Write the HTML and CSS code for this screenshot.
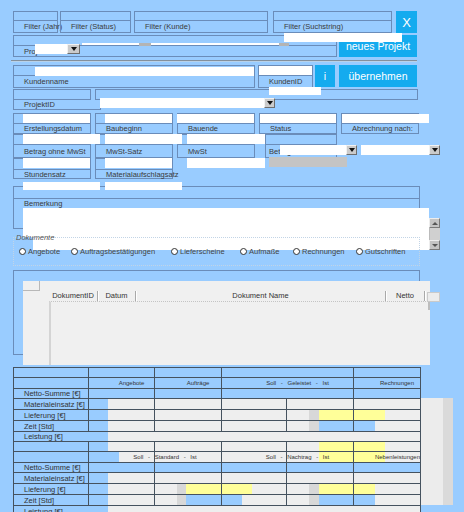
FILE: index.html
```html
<!DOCTYPE html>
<html lang="de">
<head>
<meta charset="utf-8">
<title>Projekte</title>
<link rel="stylesheet" href="styles.css">
</head>
<body>
<div class="form">

  <div class="sec s-filter">
    <div class="fld f-jahr"><div class="inp"></div><div class="lbl">Filter (Jahr)</div></div>
    <div class="fld f-status"><div class="inp"></div><div class="lbl">Filter (Status)</div></div>
    <div class="fld f-kunde"><div class="inp"></div><div class="lbl">Filter (Kunde)</div></div>
    <div class="fld f-such"><div class="inp"></div><div class="lbl">Filter (Suchstring)</div></div>
    <div class="btn btn-x">X</div>
  </div>

  <div class="sec s-pro">
    <div class="fld f-pro"><div class="inp"></div><div class="lbl">Projekt</div></div>
    <div class="btn btn-new">neues Projekt</div>
    <div class="ov ov-pro"></div>
    <div class="dd dd-pro"></div>
    <div class="slider"><span class="thumb t1"></span><span class="thumb t2"></span></div>
    <div class="ov ov-such"></div>
  </div>

  <div class="sep"></div>

  <div class="sec s-kunde">
    <div class="fld f-kname"><div class="inp"></div><div class="lbl">Kundenname</div></div>
    <div class="fld f-kid"><div class="inp white"></div><div class="lbl">KundenID</div></div>
    <div class="btn btn-i">i</div>
    <div class="btn btn-ok">übernehmen</div>
    <div class="ov ov-kname"></div>
    <div class="ov ov-kbelow"></div>
  </div>

  <div class="sec s-projid">
    <div class="line">
      <div class="box b-pid"></div>
      <div class="box b-pid2"></div>
    </div>
    <div class="pid-lbl">ProjektID</div>
    <div class="ov ov-pid"></div>
    <div class="dd dd-pid"></div>
  </div>

  <div class="sec s-dates">
    <div class="fld"><div class="inp"></div><div class="lbl">Erstellungsdatum</div></div>
    <div class="fld"><div class="inp"></div><div class="lbl">Baubeginn</div></div>
    <div class="fld"><div class="inp"></div><div class="lbl">Bauende</div></div>
    <div class="fld"><div class="inp"></div><div class="lbl">Status</div></div>
    <div class="fld"><div class="inp"></div><div class="lbl">Abrechnung nach:</div></div>
    <div class="ov e1"></div>
    <div class="ov e2"></div>
    <div class="ov e3"></div>
    <div class="ov e4"></div>
    <div class="ov e5"></div>
  </div>

  <div class="sec s-betrag">
    <div class="fld"><div class="inp"></div><div class="lbl">Betrag ohne MwSt</div></div>
    <div class="fld"><div class="inp"></div><div class="lbl">MwSt-Satz</div></div>
    <div class="fld"><div class="inp"></div><div class="lbl">MwSt</div></div>
    <div class="fld f-bet"><div class="inp"></div><div class="lbl">Betrag</div></div>
    <div class="ov w1"></div>
    <div class="ov w2"></div>
    <div class="ov w3"></div>
    <div class="ov cb1"></div>
    <div class="dd dd1"></div>
    <div class="ov cb2"></div>
    <div class="dd dd2"></div>
    <div class="ov grey"></div>
  </div>

  <div class="sec s-rate">
    <div class="fld"><div class="inp"></div><div class="lbl">Stundensatz</div></div>
    <div class="fld"><div class="inp"></div><div class="lbl">Materialaufschlagsatz</div></div>
    <div class="ov r1"></div>
    <div class="ov r2"></div>
    <div class="ov r3"></div>
    <div class="ov r4"></div>
    <div class="ov r5"></div>
  </div>

  <div class="sec s-bem">
    <div class="fld f-bem"><div class="inp"></div><div class="lbl">Bemerkung</div></div>
    <div class="ov ta1"></div>
    <div class="ov ta2"></div>
    <div class="vscroll">
      <div class="sb-btn up"></div>
      <div class="sb-track"></div>
      <div class="sb-btn down"></div>
    </div>
  </div>

  <div class="sec s-docs">
    <span class="legend">Dokumente</span>
    <div class="radios">
      <label class="radio"><i></i>Angebote</label>
      <label class="radio"><i></i>Auftragsbestätigungen</label>
      <label class="radio"><i></i>Lieferscheine</label>
      <label class="radio"><i></i>Aufmaße</label>
      <label class="radio"><i></i>Rechnungen</label>
      <label class="radio"><i></i>Gutschriften</label>
    </div>
  </div>

  <div class="sec s-list">
    <div class="panel">
      <div class="corner"></div>
      <div class="lhead">
        <div class="h-id">DokumentID</div>
        <div class="h-dat">Datum</div>
        <div class="h-name">Dokument Name</div>
        <div class="h-net">Netto</div>
      </div>
      <div class="lbody"></div>
      <div class="thumbv"></div>
    </div>
    <div class="xbox"></div>
  </div>

  <div class="tables">
    <div class="grid">
      <div class="tr top h11">
        <div></div><div></div><div></div><div class="s2"></div><div></div>
      </div>
      <div class="tr h11 head">
        <div></div><div>Angebote</div><div>Aufträge</div><div class="s2">Soll - Geleistet - Ist</div><div>Rechnungen</div>
      </div>
      <div class="tr h10">
        <div class="rl">Netto-Summe [€]</div><div></div><div></div><div class="s2"></div><div></div>
      </div>
      <div class="tr h11">
        <div class="rl">Materialeinsatz [€]</div><div class="g19"></div><div class="g"></div><div class="g"></div><div class="g"></div><div class="g"></div>
      </div>
      <div class="tr h11">
        <div class="rl">Lieferung [€]</div><div class="g19"></div><div class="g"></div><div class="g"></div><div class="c5y"></div><div class="c6y"></div>
      </div>
      <div class="tr h11">
        <div class="rl">Zeit [Std]</div><div class="g19"></div><div class="g"></div><div class="g"></div><div class="c5b"></div><div class="c6b"></div>
      </div>
      <div class="tr h9 last">
        <div class="rl all lst">Leistung [€]</div>
      </div>

      <div class="tr top h11">
        <div></div><div class="g19"></div><div class="g"></div><div class="g"></div><div class="c5y2"></div><div class="c6y"></div>
      </div>
      <div class="tr h11 head">
        <div></div><div class="s2 hs1">Soll - Standard - Ist</div><div class="s2 hs2">Soll - Nachtrag - Ist</div><div class="c6y">Nebenleistungen</div>
      </div>
      <div class="tr h10">
        <div class="rl">Netto-Summe [€]</div><div></div><div></div><div></div><div></div><div></div>
      </div>
      <div class="tr h11">
        <div class="rl">Materialeinsatz [€]</div><div class="g19"></div><div class="g"></div><div class="g"></div><div class="g"></div><div class="g"></div>
      </div>
      <div class="tr h11">
        <div class="rl">Lieferung [€]</div><div class="g19"></div><div class="c3y"></div><div class="c4y"></div><div class="c5y"></div><div class="c6y2"></div>
      </div>
      <div class="tr h11">
        <div class="rl">Zeit [Std]</div><div class="g19"></div><div class="c3b"></div><div class="c4b"></div><div class="c5b"></div><div class="c6b"></div>
      </div>
      <div class="tr h10 last">
        <div class="rl all lst">Leistung [€]</div>
      </div>
    </div>
    <div class="side"></div>
  </div>

</div>
</body>
</html>
```

FILE: styles.css
```css
* { box-sizing: border-box; margin: 0; padding: 0; }
html, body { width: 464px; height: 512px; overflow: hidden; }
body {
  background: #99ccff;
  font-family: "Liberation Sans", Arial, sans-serif;
  font-size: 7.5px;
  color: #3a3a3a;
}
.form { position: relative; padding-top: 11px; }
.sec { position: relative; margin-left: 13px; }

.fld { border: 1px solid #6a8cb9; display: flex; flex-direction: column; flex: none; }
.inp { border-bottom: 1px solid #6a8cb9; flex: none; }
.lbl { flex: 1; padding-left: 10px; white-space: nowrap; display: flex; align-items: center; }
.white { background: #fff; }

.btn {
  flex: none; background: #14abef; color: #fff;
  display: flex; align-items: center; justify-content: center;
  font-size: 10.5px; white-space: nowrap;
}
.ov { position: absolute; background: #fff; }
.dd {
  position: absolute; background: #cbcbcb;
  border: 1px solid; border-color: #f2f2f2 #6e6e6e #6e6e6e #f2f2f2;
  display: flex; align-items: center; justify-content: center;
}
.dd::after {
  content: ""; border-left: 3.5px solid transparent; border-right: 3.5px solid transparent;
  border-top: 4px solid #111;
}

/* filter row */
.s-filter { display: flex; height: 22px; }
.s-filter .inp { height: 9px; }
.f-jahr { width: 45px; margin-right: 2px; }
.f-status { width: 71px; margin-right: 3px; }
.f-kunde { width: 134px; margin-right: 5px; }
.f-such { width: 119px; margin-right: 4px; }
.btn-x { width: 21px; font-size: 13px; }

/* projekt row */
.s-pro { display: flex; height: 22px; margin-top: 2px; }
.s-pro .inp { height: 10px; }
.f-pro { width: 324px; margin-right: 2px; }
.btn-new { width: 78px; }
.ov-pro { left: 22px; top: 9px; width: 32px; height: 10px; }
.dd-pro { left: 54px; top: 9px; width: 13px; height: 10px; }
.slider { position: absolute; left: 69px; top: 8px; width: 197px; height: 2px; background: #fff; }
.thumb { position: absolute; top: 0; height: 3px; background: #b4b4b4; }
.t1 { left: 57px; width: 12px; }
.t2 { left: 197px; width: 10px; }
.ov-such { left: 271px; top: -2px; width: 118px; height: 9px; z-index: 2; }

.sep {
  margin: 3px 0 0 11px; width: 406px; height: 2px;
  background: linear-gradient(#84909c 50%, #b8d2ea 50%);
}

/* kunde row */
.s-kunde { display: flex; height: 23px; margin-top: 3px; }
.s-kunde .inp { height: 10px; }
.f-kname { width: 242px; margin-right: 3px; }
.f-kid { width: 55px; margin-right: 2px; }
.btn-i { width: 20px; height: 22px; margin-right: 4px; }
.btn-ok { width: 78px; height: 22px; }
.ov-kname { left: 22px; top: 2px; width: 219px; height: 9px; }
.ov-kbelow { left: 256px; top: 22px; width: 52px; height: 8px; z-index: 2; }

/* projektID */
.s-projid { margin-top: 1px; height: 21px; }
.line { display: flex; height: 11px; }
.box { border: 1px solid #6a8cb9; height: 11px; flex: none; }
.b-pid { width: 78px; margin-right: 4px; }
.b-pid2 { width: 323px; }
.pid-lbl {
  width: 88px; height: 10px; border: 1px solid #6a8cb9; border-top: 0;
  padding-left: 10px; line-height: 9px; white-space: nowrap;
}
.ov-pid { left: 87px; top: 9px; width: 164px; height: 10px; }
.dd-pid { left: 251px; top: 9px; width: 11px; height: 10px; }

/* dates */
.s-dates {
  margin-top: 3px; height: 21px;
  display: grid; grid-template-columns: repeat(5, 78px); column-gap: 4px;
}
.s-dates .inp { height: 10px; }
.e1, .e2, .e3, .e4, .e5 { top: 1px; height: 9px; }
.e1 { left: 10px; width: 67px; }
.e2 { left: 92px; width: 67px; }
.e3 { left: 164px; width: 77px; }
.e4 { left: 247px; width: 76px; }
.e5 { left: 329px; width: 87px; }

/* betrag */
.s-betrag { display: flex; height: 24px; }
.s-betrag .fld { width: 78px; margin-right: 4px; }
.s-betrag .inp { height: 10px; }
.s-betrag .fld.f-bet { width: 72px; margin-left: 6px; margin-right: 0; }
.f-bet .lbl { padding-left: 3px; }
.w1, .w2, .w3 { top: 0; height: 10px; }
.w1 { left: 10px; width: 77px; }
.w2 { left: 92px; width: 77px; }
.w3 { left: 174px; width: 78px; }
.cb1 { left: 267px; top: 11px; width: 66px; height: 10px; }
.dd1 { left: 333px; top: 11px; width: 11px; height: 10px; }
.cb2 { left: 348px; top: 11px; width: 68px; height: 10px; }
.dd2 { left: 416px; top: 11px; width: 11px; height: 10px; }
.grey { left: 256px; top: 23px; width: 78px; height: 10px; background: #c4c4c4; z-index: 2; }

/* rates */
.s-rate { display: flex; height: 21px; }
.s-rate .fld { width: 78px; margin-right: 4px; }
.s-rate .inp { height: 11px; }
.r1, .r2, .r3 { top: 0; height: 10px; }
.r1 { left: 10px; width: 67px; }
.r2 { left: 92px; width: 67px; }
.r3 { left: 174px; width: 78px; }
.r4, .r5 { top: 24px; height: 8px; z-index: 2; }
.r4 { left: 10px; width: 77px; }
.r5 { left: 92px; width: 77px; }

/* bemerkung */
.s-bem { margin-top: 7px; height: 43px; }
.f-bem { width: 407px; height: 43px; }
.f-bem .inp { height: 12px; }
.f-bem .lbl { flex: none; height: 8px; }
.ta1 { left: 10px; top: 22px; width: 406px; height: 29px; z-index: 1; }
.ta2 { left: 20px; top: 51px; width: 396px; height: 13px; z-index: 1; }
.vscroll {
  position: absolute; left: 416px; top: 32px; width: 11px; height: 32px;
  background: #c9c9c9; display: flex; flex-direction: column; z-index: 1;
}
.sb-btn {
  height: 10px; flex: none; background: #c4c4c4;
  border: 1px solid; border-color: #ededed #7a7a7a #7a7a7a #ededed;
  display: flex; align-items: center; justify-content: center;
}
.sb-btn.up::after {
  content: ""; border-left: 3px solid transparent; border-right: 3px solid transparent;
  border-bottom: 3px solid #555;
}
.sb-btn.down::after {
  content: ""; border-left: 3px solid transparent; border-right: 3px solid transparent;
  border-top: 3px solid #555;
}
.sb-track { flex: 1; background: #d0d0d0; border-left: 1px solid #bbb; }

/* dokumente */
.s-docs {
  margin-top: 8px; width: 407px; height: 29px;
  border: 1px dotted #c2d4e6; z-index: 2;
}
.legend {
  position: absolute; left: 2px; top: -5px; font-style: italic; color: #555;
  line-height: 9px; white-space: nowrap;
}
.radios { display: flex; padding-left: 5px; margin-top: 9px; height: 8px; align-items: center; }
.radio { display: flex; align-items: center; gap: 2px; white-space: nowrap; flex: none; color: #444; }
.radio i {
  width: 7px; height: 7px; border: 1px solid #333; border-radius: 50%;
  background: #fff; flex: none;
}
.radio:nth-child(1) { width: 52px; }
.radio:nth-child(2) { width: 100px; }
.radio:nth-child(3) { width: 69px; }
.radio:nth-child(4) { width: 53px; }
.radio:nth-child(5) { width: 63px; }

/* dokument list */
.s-list { margin-top: 4px; width: 407px; height: 85px; border: 1px solid #6a8cb9; }
.panel {
  position: absolute; left: 9px; top: 10px; width: 407px; height: 84px;
  background: #f0f0f0; z-index: 1;
}
.corner { width: 17px; height: 10px; border-right: 1px solid #b8b8b8; border-bottom: 1px solid #b8b8b8; }
.lhead { display: flex; height: 10px; margin-left: 26px; color: #333; }
.lhead div {
  flex: none; text-align: center; line-height: 10px; white-space: nowrap;
  border-right: 1px solid #a9a9a9; box-shadow: 1px 0 0 #fff;
}
.h-id { width: 49px; }
.h-dat { width: 38px; }
.h-name { width: 250px; }
.h-net { width: 39px; }
.lbody {
  margin-left: 26px; height: 64px;
  border-top: 1px dotted #c4c4c4; border-left: 2px solid #d4d4d4;
}
.thumbv { position: absolute; right: 0; top: 21px; width: 2px; height: 8px; background: #bdbdbd; }
.xbox {
  position: absolute; left: 413px; top: 21px; width: 13px; height: 10px;
  background: #ececec; border: 1px solid #cacaca; z-index: 2;
}

/* tables */
.tables { display: flex; margin-left: 13px; margin-top: 12px; align-items: flex-start; }
.grid { width: 408px; border-left: 1px solid #45525f; flex: none; }
.tr {
  display: grid; grid-template-columns: 75px 66px 67px 65px 67px 67px;
  border-bottom: 1px solid #45525f;
}
.tr.top { border-top: 1px solid #45525f; }
.tr.last { border-bottom: 0; }
.h9 { height: 9px; }
.h10 { height: 10px; }
.h11 { height: 11px; }
.tr > div {
  border-right: 1px solid #45525f; white-space: nowrap;
  display: flex; align-items: center; color: #333;
}
.rl { padding-left: 10px; }
.s2 { grid-column: span 2; }
.all { grid-column: 1 / -1; }
.head > div { font-size: 6px; justify-content: center; padding-left: 20px; word-spacing: 3px; }
.head > div:first-child { padding-left: 0; }

.g { background: #eeeeee; }
.g19 { background: linear-gradient(to right, transparent 19px, #eeeeee 19px); }
.lst { background: linear-gradient(to right, transparent 94px, #eeeeee 94px); }
.c5y { background: linear-gradient(to right, #eeeeee 22px, #d8d8d8 22px, #d8d8d8 32px, #ffff99 32px); }
.c5b { background: linear-gradient(to right, #eeeeee 22px, #d8d8d8 22px, #d8d8d8 32px, transparent 32px); }
.c5y2 { background: linear-gradient(to right, #eeeeee 32px, #ffff99 32px); }
.c6y { background: linear-gradient(to right, #ffff99 31px, #eeeeee 31px); }
.c6y2 { background: linear-gradient(to right, #ffff99 21px, #eeeeee 21px); }
.c6b { background: linear-gradient(to right, transparent 21px, #eeeeee 21px); }
.c3y { background: linear-gradient(to right, #eeeeee 22px, #d8d8d8 22px, #d8d8d8 31px, #ffff99 31px); }
.c3b { background: linear-gradient(to right, #eeeeee 22px, #d8d8d8 22px, #d8d8d8 31px, transparent 31px); }
.c4y { background: linear-gradient(to right, #ffff99 30px, #eeeeee 30px); }
.c4b { background: linear-gradient(to right, transparent 20px, #eeeeee 20px); }
.hs1 {
  background: linear-gradient(to right, transparent 30px, #eeeeee 30px, #eeeeee 65px,
    #45525f 65px, #45525f 66px, #eeeeee 66px);
}
.hs2 {
  background: linear-gradient(to right, #eeeeee 64px, #45525f 64px, #45525f 65px,
    #eeeeee 65px, #eeeeee 97px, #ffff99 97px);
}
.head > .c6y { justify-content: flex-end; padding-left: 0; overflow: hidden; }

.side {
  width: 32px; height: 107px; margin-top: 31px;
  background: linear-gradient(to right, #ececec 22px, #dadada 22px);
}
```
